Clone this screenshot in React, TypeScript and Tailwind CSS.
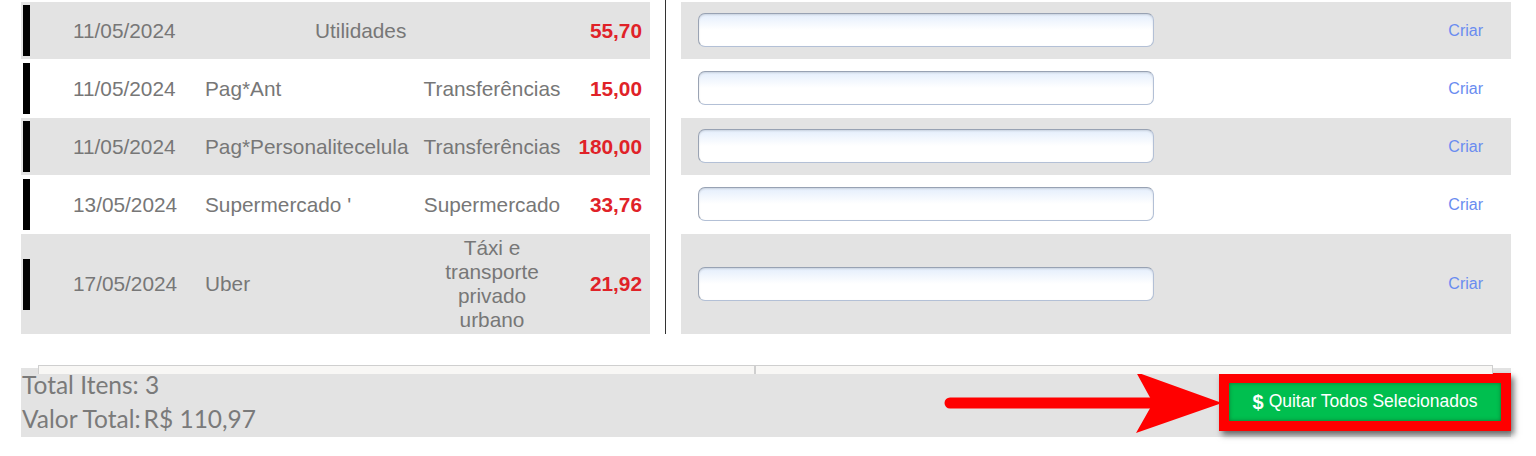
import React from "react";

type Row = { date: string; desc: string; cat: string; value: string; tall?: boolean; merged?: boolean };

const rows: Row[] = [
  { date: "11/05/2024", desc: "Utilidades", cat: "", value: "55,70", merged: true },
  { date: "11/05/2024", desc: "Pag*Ant", cat: "Transferências", value: "15,00" },
  { date: "11/05/2024", desc: "Pag*Personalitecelula", cat: "Transferências", value: "180,00" },
  { date: "13/05/2024", desc: "Supermercado '", cat: "Supermercado", value: "33,76" },
  { date: "17/05/2024", desc: "Uber", cat: "Táxi e transporte privado urbano", value: "21,92", tall: true },
];

function rowBg(i: number) {
  return i % 2 === 0 ? "bg-[#e3e3e3]" : "bg-white";
}

export default function App() {
  return (
    <div className="relative h-[456px] w-[1536px] overflow-hidden bg-white font-['Liberation_Sans',Arial,sans-serif]">
      <div className="flex h-[334px] items-start">
        {/* lançamentos */}
        <div className="ml-[21px] mt-[2px] flex w-[629px] flex-col gap-[1px] text-[20.8px] text-[#777]">
          {rows.map((row, i) => (
            <div key={i} className={`flex items-center ${row.tall ? "py-[2px] leading-[24px]" : "h-[57px]"} ${rowBg(i)}`}>
              <div className="w-[52px] pl-[2px]">
                <div className="h-[51px] w-[7px] bg-black" />
              </div>
              <div className="w-[132px] whitespace-nowrap">{row.date}</div>
              <div className={`w-[218px] overflow-hidden whitespace-nowrap ${row.merged ? "pl-[110px]" : ""}`}>{row.desc}</div>
              <div className="w-[138px] text-center">{row.cat}</div>
              <div className="flex-1 pr-[8px] text-right font-bold text-[#e02228]">{row.value}</div>
            </div>
          ))}
        </div>

        <div className="ml-[15px] h-[334px] w-[1px] bg-[#333]" />

        {/* regras */}
        <div className="ml-[15px] mt-[2px] flex w-[830px] flex-col gap-[1px]">
          {rows.map((row, i) => (
            <div key={i} className={`flex items-center ${row.tall ? "h-[100px]" : "h-[57px]"} ${rowBg(i)}`}>
              <input
                type="text"
                className="mb-[1px] ml-[17px] h-[34px] w-[456px] rounded-[7px] border border-[#b3c0d6] border-l-[#9aa3b3] border-t-[#98a2b3] bg-gradient-to-b from-[#e4eefc] via-white to-white shadow-[inset_0_1px_2px_rgba(0,0,0,0.12)] outline-none"
              />
              <div className="flex-1" />
              <span className="pr-[28px] text-[16px] text-[#6a8cf0]">Criar</span>
            </div>
          ))}
        </div>
      </div>

      {/* rodapé */}
      <div className="ml-[21px] mt-[31px] w-[1490px]">
        <div className="relative z-10 -mb-[6px] ml-[17px] flex h-[9px] w-[1455px] border border-b-0 border-[#cfcfcf] bg-[#f8f7f5]">
          <div className="w-[717px] border-r-2 border-[#cfcfcf]" />
        </div>
        <div className="flex h-[69px] justify-between bg-[#e3e3e3]">
          <div className="pl-[1px] font-['Lato',sans-serif] text-[24.5px] leading-[34px] text-[#7a7a7a]">
            <div>Total Itens: 3</div>
            <div>
              Valor Total:<span className="ml-[3px]">R$ 110,97</span>
            </div>
          </div>
          <div className="mb-[2px] self-center border-[10px] border-[#ff0000] shadow-[3px_4px_6px_rgba(0,0,0,0.55)]">
            <button className="flex h-[38px] w-[272px] items-center justify-center gap-[5px] bg-[#00bf4f] text-[17.5px] text-white shadow-[inset_0_0_4px_#0a7a35]">
              <span className="text-[20px] font-bold">$</span>
              <span>Quitar Todos Selecionados</span>
            </button>
          </div>
        </div>
      </div>

      {/* seta de destaque */}
      <svg className="absolute left-[940px] top-[368px]" width="290" height="70" viewBox="0 0 290 70">
        <line x1="10" y1="35" x2="220" y2="35" stroke="#ff0000" strokeWidth="11" strokeLinecap="round" />
        <polygon points="196,4 282,35 196,65 213,35" fill="#ff0000" />
      </svg>
    </div>
  );
}
